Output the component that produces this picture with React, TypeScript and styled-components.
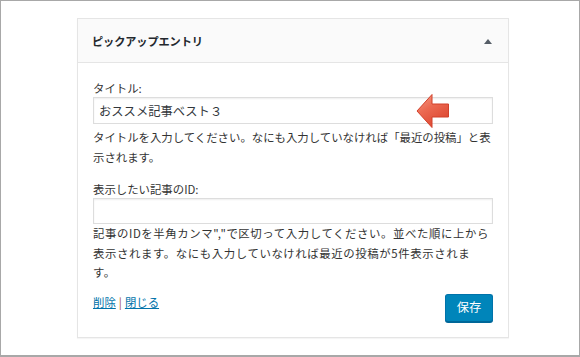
import styled, { createGlobalStyle } from "styled-components";

const GlobalStyle = createGlobalStyle`
  html, body {
    margin: 0;
    padding: 0;
    background: #ffffff;
  }
  * {
    box-sizing: border-box;
  }
`;

const Frame = styled.div`
  width: 580px;
  height: 357px;
  border: 1px solid #a8a8a8;
  border-bottom: 2px solid #a8a8a8;
  background: #ffffff;
  padding: 17px 0 0 76px;
  font-family: "Noto Sans CJK JP", "Noto Sans", sans-serif;
  color: #333333;
`;

const Widget = styled.div`
  width: 432px;
  border: 1px solid #e5e5e5;
  background: #ffffff;
  box-shadow: 0 1px 1px rgba(0, 0, 0, 0.04);
`;

const WidgetTop = styled.div`
  display: flex;
  align-items: center;
  justify-content: space-between;
  height: 44px;
  padding: 1px 16px 0 14px;
  background: #fafafa;
  border-bottom: 1px solid #e5e5e5;
`;

const WidgetTitle = styled.h3`
  margin: 0;
  font-size: 11.2px;
  font-weight: 700;
  color: #23282d;
  letter-spacing: -0.1px;
`;

const Toggle = styled.span`
  width: 0;
  height: 0;
  border-left: 4px solid transparent;
  border-right: 4px solid transparent;
  border-bottom: 5px solid #555d66;
`;

const WidgetBody = styled.div`
  padding: 17px 15px 15px;
`;

const Field = styled.div<{ $gap?: number }>`
  margin-top: ${(p) => p.$gap ?? 0}px;
`;

const Label = styled.label`
  display: block;
  font-size: 11.4px;
  line-height: 17px;
  color: #333333;
`;

const InputWrap = styled.div`
  position: relative;
`;

const TextInput = styled.input<{ $h: number }>`
  display: block;
  width: 400px;
  height: ${(p) => p.$h}px;
  margin: 0;
  padding: 0 5px;
  border: 1px solid #dddddd;
  box-shadow: inset 0 1px 2px rgba(0, 0, 0, 0.07);
  background: #ffffff;
  font-family: "Noto Sans CJK JP", sans-serif;
  font-size: 12.3px;
  color: #32373c;
  outline: none;
`;

const Help = styled.p<{ $lh: number; $top?: number; $spacing?: number }>`
  margin: ${(p) => p.$top ?? 0}px 0 0;
  font-size: 11.4px;
  line-height: ${(p) => p.$lh}px;
  letter-spacing: ${(p) => p.$spacing ?? 0}px;
  white-space: nowrap;
  color: #333333;
`;

const Arrow = styled.svg`
  position: absolute;
  left: 322px;
  top: -5px;
`;

const Footer = styled.div`
  display: flex;
  justify-content: space-between;
  align-items: flex-start;
  margin-top: 11px;
`;

const Links = styled.div`
  font-size: 11.4px;
  line-height: 16px;
  color: #a04a3a;
`;

const Link = styled.a`
  color: #0073aa;
  text-decoration: underline;
  cursor: pointer;
`;

const Sep = styled.span`
  margin: 0 3px;
`;

const SaveButton = styled.button`
  width: 48px;
  height: 28px;
  padding: 0 0 1px;
  border: 1px solid #0073aa;
  border-bottom-color: #006799;
  border-radius: 3px;
  background: #0085ba;
  box-shadow: 0 1px 0 #006799;
  color: #ffffff;
  font-family: "Noto Sans CJK JP", sans-serif;
  font-size: 12.3px;
  cursor: pointer;
`;

function PointerArrow() {
  return (
    <Arrow width="36" height="38" viewBox="0 0 36 38">
      <defs>
        <linearGradient id="arrowFill" x1="0" y1="0" x2="0.6" y2="1">
          <stop offset="0" stopColor="#f6a08c" />
          <stop offset="0.45" stopColor="#ec6a52" />
          <stop offset="1" stopColor="#dc4630" />
        </linearGradient>
      </defs>
      <path
        d="M2 19 L17 2.5 L17 12 L33.5 12 L33.5 25 L17 25 L17 35.5 Z"
        fill="url(#arrowFill)"
        stroke="#d2412b"
        strokeWidth="1"
        strokeLinejoin="miter"
      />
    </Arrow>
  );
}

export default function App() {
  return (
    <>
      <GlobalStyle />
      <Frame>
        <Widget>
          <WidgetTop>
            <WidgetTitle>ピックアップエントリ</WidgetTitle>
            <Toggle />
          </WidgetTop>

          <WidgetBody>
            <Field>
              <Label>タイトル:</Label>
              <InputWrap>
                <TextInput $h={27} defaultValue="おススメ記事ベスト３" />
                <PointerArrow />
              </InputWrap>
              <Help $lh={20} $top={3}>
                タイトルを入力してください。なにも入力していなければ「最近の投稿」と表
                <br />
                示されます。
              </Help>
            </Field>

            <Field $gap={14}>
              <Label>表示したい記事のID:</Label>
              <TextInput $h={26} defaultValue="" />
              <Help $lh={19.5} $spacing={0.6}>
                記事のIDを半角カンマ","で区切って入力してください。並べた順に上から
                <br />
                表示されます。なにも入力していなければ最近の投稿が5件表示されま
                <br />
                す。
              </Help>
            </Field>

            <Footer>
              <Links>
                <Link>削除</Link>
                <Sep>|</Sep>
                <Link>閉じる</Link>
              </Links>
              <SaveButton>保存</SaveButton>
            </Footer>
          </WidgetBody>
        </Widget>
      </Frame>
    </>
  );
}
